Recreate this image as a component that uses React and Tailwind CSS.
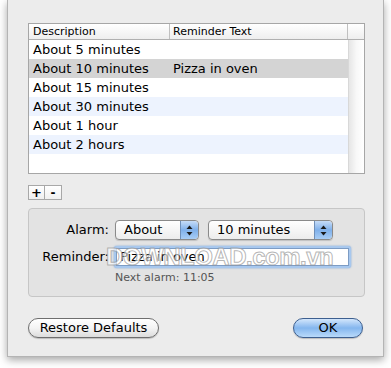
import React from "react";

const rows = [
  { d: "About 5 minutes", r: "", bg: "bg-white" },
  { d: "About 10 minutes", r: "Pizza in oven", bg: "bg-[#d4d4d4]" },
  { d: "About 15 minutes", r: "", bg: "bg-white" },
  { d: "About 30 minutes", r: "", bg: "bg-[#edf3fe]" },
  { d: "About 1 hour", r: "", bg: "bg-white" },
  { d: "About 2 hours", r: "", bg: "bg-[#edf3fe]" },
];

function Arrows() {
  return (
    <div className="w-[18px] self-stretch rounded-r-[4px] bg-gradient-to-b from-[#c6dcf7] via-[#7fb0ea] to-[#a8cdf5] border-l border-[#6f8fb8] flex items-center justify-center">
      <svg width="7" height="11" viewBox="0 0 7 11">
        <path d="M3.5 0.5 L6.5 4 L0.5 4 Z" fill="#1a1a1a" />
        <path d="M3.5 10.5 L6.5 7 L0.5 7 Z" fill="#1a1a1a" />
      </svg>
    </div>
  );
}

function Popup({ label, w }) {
  return (
    <div className={`${w} h-[20px] flex rounded-[4px] border border-[#8a8a8a] bg-gradient-to-b from-white to-[#ececec] shadow-[0_1px_1px_rgba(0,0,0,0.15)]`}>
      <div className="flex-1 pl-[8px] text-[13px] leading-[18px] text-black">{label}</div>
      <Arrows />
    </div>
  );
}

export default function App() {
  return (
    <div className="w-[391px] h-[368px] bg-white relative font-['DejaVu_Sans',sans-serif] text-black overflow-hidden">
      <div className="ml-[7px] w-[377px] h-[357px] bg-[#ececec] border-l border-r border-b border-[#b4b4b4] shadow-[0_3px_8px_rgba(0,0,0,0.35)] flex flex-col pl-[20px] pr-[20px] pt-[23px]">
        {/* Table */}
        <div className="w-[337px] h-[151px] border border-[#a6a6a6] bg-white flex flex-col">
          <div className="h-[16px] flex border-b border-[#b0b0b0] bg-gradient-to-b from-white to-[#eeeeee] text-[11px] leading-[15px]">
            <div className="w-[141px] pl-[4px] border-r border-[#c0c0c0]">Description</div>
            <div className="w-[178px] pl-[3px] border-r border-[#c0c0c0]">Reminder Text</div>
            <div className="flex-1" />
          </div>
          <div className="flex-1 flex">
            <div className="w-[319px] flex flex-col">
              {rows.map((row) => (
                <div key={row.d} className={`h-[19px] flex text-[13px] leading-[19px] ${row.bg}`}>
                  <div className="w-[141px] pl-[4px] whitespace-nowrap">{row.d}</div>
                  <div className="pl-[3px] whitespace-nowrap">{row.r}</div>
                </div>
              ))}
            </div>
            <div className="flex-1 bg-gradient-to-r from-[#e6e6e6] via-[#f8f8f8] to-white border-l border-[#d8d8d8]" />
          </div>
        </div>

        {/* +/- */}
        <div className="mt-[11px] flex">
          <div className="w-[17px] h-[15px] border border-[#a8a8a8] bg-gradient-to-b from-white to-[#f0f0f0] flex items-center justify-center text-[13px] font-bold leading-none">+</div>
          <div className="w-[17px] h-[15px] border border-l-0 border-[#a8a8a8] bg-gradient-to-b from-white to-[#f0f0f0] flex items-center justify-center text-[12px] font-bold leading-none">-</div>
        </div>

        {/* Group box */}
        <div className="mt-[8px] w-[337px] h-[89px] rounded-[4px] border border-[#c6c6c6] bg-[#e3e3e3] relative">
          <div className="pt-[11px] flex items-center">
            <div className="w-[80px] text-right text-[13px] pr-[0px]">Alarm:</div>
            <div className="ml-[6px]">
              <Popup label="About" w="w-[84px]" />
            </div>
            <div className="ml-[9px]">
              <Popup label="10 minutes" w="w-[125px]" />
            </div>
          </div>
          <div className="mt-[6px] flex items-center">
            <div className="w-[80px] text-right text-[13px]">Reminder:</div>
            <div className="ml-[5px] w-[237px] h-[22px] rounded-[3px] p-[2px] bg-[#a8c8ee] shadow-[0_0_2px_#6f9fd8]">
              <div className="h-full bg-white border border-[#7d9cc4] pl-[3px] text-[13px] leading-[16px]">Pizza in oven</div>
            </div>
          </div>
          <div className="mt-[3px] pl-[86px] text-[11px] text-[#555555] leading-[14px]">Next alarm: 11:05</div>
        </div>

        {/* Bottom buttons */}
        <div className="mt-[21px] flex justify-between">
          <div className="w-[131px] h-[20px] rounded-full border border-[#6e6e6e] bg-gradient-to-b from-white via-[#f4f4f4] to-[#dcdcdc] flex items-center justify-center text-[13px] shadow-[0_1px_1px_rgba(0,0,0,0.2)]">Restore Defaults</div>
          <div className="w-[70px] h-[20px] rounded-full border border-[#3d5f8f] bg-gradient-to-b from-[#d3e6fb] via-[#84b6ee] to-[#b9dafa] flex items-center justify-center text-[13px] shadow-[0_1px_1px_rgba(0,0,0,0.2)]">OK</div>
        </div>
      </div>

      {/* watermark */}
      <div className="absolute left-[106px] top-[239px] text-[24px] font-bold tracking-[-0.5px] text-white/60 [-webkit-text-stroke:1px_rgba(150,150,150,0.7)] pointer-events-none whitespace-nowrap font-['Liberation_Sans',sans-serif]">
        DOWNLOAD.com.vn
      </div>
    </div>
  );
}
